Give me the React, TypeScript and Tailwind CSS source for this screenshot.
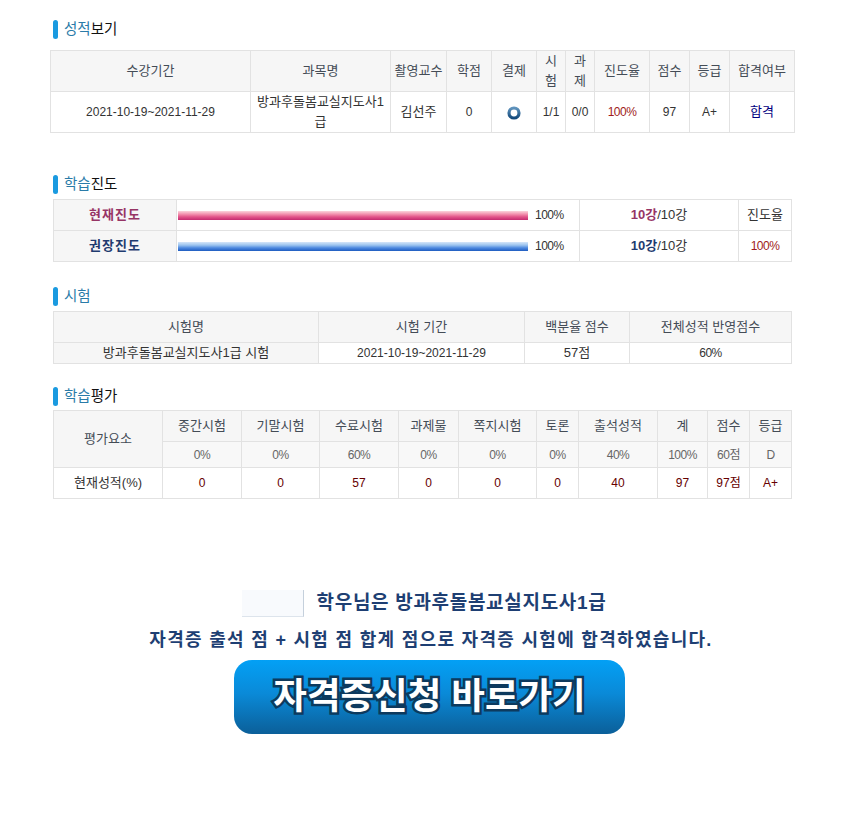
const font = { fontFamily: '"Liberation Sans", "Noto Sans CJK KR", "Noto Sans", sans-serif' };

function Heading({ blue, dark }: { blue: string; dark?: string }) {
  return (
    <div className="flex items-center gap-[6px] h-[20px]">
      <span className="w-[5px] h-[19px] rounded-[3px] bg-[#1a9ae0]" />
      <h2 className="text-[14.5px] leading-[20px] font-normal text-[#2a7ba8]">
        {blue}
        {dark && <span className="text-[#111]">{dark}</span>}
      </h2>
    </div>
  );
}

const cell = "border border-[#e2e2e2] text-center p-0";
const th = `${cell} bg-[#f6f6f6] font-normal text-[#444c56]`;
const num = "text-[12px]";
const pct = "text-[12px] tracking-[-0.5px]";

function Cols({ w }: { w: number[] }) {
  return (
    <colgroup>
      {w.map((x, i) => (
        <col key={i} style={{ width: x }} />
      ))}
    </colgroup>
  );
}

function Ring() {
  return (
    <svg width="14" height="14" viewBox="0 0 14 14" className="inline-block align-middle">
      <defs>
        <linearGradient id="ring" x1="0" y1="0" x2="0" y2="1">
          <stop offset="0" stopColor="#5f93bd" />
          <stop offset="1" stopColor="#134a7c" />
        </linearGradient>
      </defs>
      <circle cx="7" cy="7" r="5" fill="#fff" stroke="url(#ring)" strokeWidth="3.2" />
    </svg>
  );
}

function Bar({ cls }: { cls: string }) {
  return (
    <div className="flex items-center pl-[1px]">
      <div className={`w-[350px] h-[9px] ${cls}`} />
      <span className={`ml-[7px] ${pct}`}>100%</span>
    </div>
  );
}

export default function App() {
  const evalHead = ["중간시험", "기말시험", "수료시험", "과제물", "쪽지시험", "토론", "출석성적", "계", "점수", "등급"];
  const evalPct = ["0%", "0%", "60%", "0%", "0%", "0%", "40%", "100%", "60점", "D"];
  const evalVal = ["0", "0", "57", "0", "0", "0", "40", "97", "97점", "A+"];
  return (
    <div style={font} className="w-[852px] h-[813px] bg-white overflow-hidden text-[13px] text-[#333] pt-[19px]">
      <div className="pl-[53px]">
        <Heading blue="성적" dark="보기" />
      </div>
      <div className="pl-[50px] mt-[11px]">
        <table className="table-fixed border-collapse w-[744px] leading-[20px]">
          <Cols w={[200, 140, 56, 45, 45, 29, 29, 55, 40, 40, 65]} />
          <thead>
            <tr className="h-[41px]">
              {["수강기간", "과목명", "촬영교수", "학점", "결제"].map((t) => (
                <th key={t} className={th}>{t}</th>
              ))}
              <th className={th}>시<br />험</th>
              <th className={th}>과<br />제</th>
              {["진도율", "점수", "등급", "합격여부"].map((t) => (
                <th key={t} className={th}>{t}</th>
              ))}
            </tr>
          </thead>
          <tbody>
            <tr className="h-[41px]">
              <td className={`${cell} ${num}`}>2021-10-19~2021-11-29</td>
              <td className={cell}>방과후돌봄교실지도사1<br />급</td>
              <td className={cell}>김선주</td>
              <td className={`${cell} ${num}`}>0</td>
              <td className={cell}><Ring /></td>
              <td className={`${cell} ${num}`}>1/1</td>
              <td className={`${cell} ${num}`}>0/0</td>
              <td className={`${cell} ${pct} text-[#a01c20]`}>100%</td>
              <td className={`${cell} ${num}`}>97</td>
              <td className={`${cell} ${num}`}>A+</td>
              <td className={`${cell} text-[#000080]`}>합격</td>
            </tr>
          </tbody>
        </table>
      </div>

      <div className="pl-[53px] mt-[41px]">
        <Heading blue="학습" dark="진도" />
        <table className="table-fixed border-collapse w-[738px] mt-[5px]">
          <Cols w={[123, 403, 159, 53]} />
          <tbody>
            <tr className="h-[31px]">
              <th className={`${cell} bg-[#f6f6f6] font-bold tracking-[1px] text-[#963465]`}>현재진도</th>
              <td className={`${cell} text-left`}>
                <Bar cls="bg-[linear-gradient(#fbd5dc,#f291ae_35%,#e2558a_65%,#c42b70)]" />
              </td>
              <td className={cell}><b className="text-[#963465]">10강</b>/10강</td>
              <td className={cell}>진도율</td>
            </tr>
            <tr className="h-[31px]">
              <th className={`${cell} bg-[#f6f6f6] font-bold tracking-[1px] text-[#1f3b6f]`}>권장진도</th>
              <td className={`${cell} text-left`}>
                <Bar cls="bg-[linear-gradient(#d6e6f9,#9cc4ef_35%,#4f8ae0_65%,#1f5cc0)]" />
              </td>
              <td className={cell}><b className="text-[#1f3b6f]">10강</b>/10강</td>
              <td className={`${cell} ${pct} text-[#a01c20]`}>100%</td>
            </tr>
          </tbody>
        </table>

        <div className="mt-[24px]"><Heading blue="시험" /></div>
        <table className="table-fixed border-collapse w-[738px] mt-[5px]">
          <Cols w={[265, 206, 105, 162]} />
          <tbody>
            <tr className="h-[31px]">
              {["시험명", "시험 기간", "백분율 점수", "전체성적 반영점수"].map((t) => (
                <th key={t} className={th}>{t}</th>
              ))}
            </tr>
            <tr className="h-[21px] leading-[18px]">
              <td className={`${cell} bg-[#f6f6f6]`}>방과후돌봄교실지도사1급 시험</td>
              <td className={`${cell} ${num}`}>2021-10-19~2021-11-29</td>
              <td className={cell}>57점</td>
              <td className={`${cell} ${pct}`}>60%</td>
            </tr>
          </tbody>
        </table>

        <div className="mt-[22px]"><Heading blue="학습" dark="평가" /></div>
        <table className="table-fixed border-collapse w-[738px] mt-[4px]">
          <Cols w={[109, 79, 78, 79, 60, 78, 42, 79, 50, 42, 42]} />
          <tbody>
            <tr className="h-[31px]">
              <th rowSpan={2} className={th}>평가요소</th>
              {evalHead.map((t) => (
                <th key={t} className={th}>{t}</th>
              ))}
            </tr>
            <tr className="h-[26px]">
              {evalPct.map((t, i) => (
                <td key={i} className={`${cell} ${pct} bg-[#f8f8f8] text-[#666]`}>{t}</td>
              ))}
            </tr>
            <tr className="h-[31px]">
              <td className={cell}>현재성적(%)</td>
              {evalVal.map((t, i) => (
                <td key={i} className={`${cell} ${num} text-[#660000]`}>{t}</td>
              ))}
            </tr>
          </tbody>
        </table>
      </div>

      <div className="mt-[90px] flex flex-col items-center text-[#1e3f73] font-bold">
        <div className="flex items-center h-[28px] text-[19px] tracking-[0.7px] ml-[-4px]">
          <span className="w-[62px] h-[27px] bg-[#f8fafd] border-r border-r-[#c5d0dc] border-b border-b-[#dde4ec] mr-[13px]" />
          <span>학우님은 방과후돌봄교실지도사1급</span>
        </div>
        <p className="mt-[11px] text-[18px] leading-[24px] tracking-[1.3px] ml-[10px]">
          자격증 출석 점 + 시험 점 합계 점으로 자격증 시험에 합격하였습니다.
        </p>
        <a className="mt-[8px] ml-[7px] w-[391px] h-[74px] rounded-[18px] bg-[linear-gradient(#03a0f5,#0a8ad8_45%,#0b5f99)] flex items-center justify-center text-white text-[36.5px] leading-none font-bold tracking-normal [-webkit-text-stroke:5px_#0d3a5e] [paint-order:stroke_fill]">
          자격증신청 바로가기
        </a>
      </div>
    </div>
  );
}
